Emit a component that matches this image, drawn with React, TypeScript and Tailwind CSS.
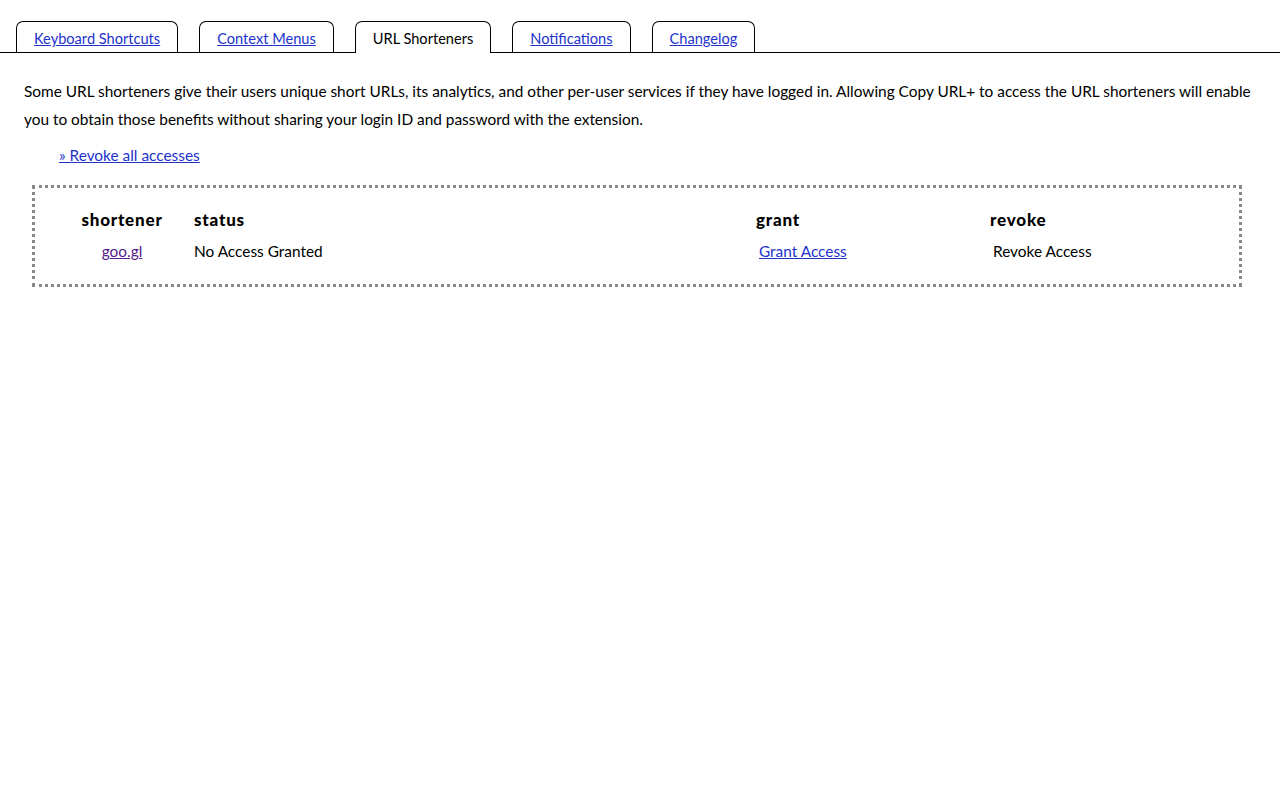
import React from "react";

const tabs = [
  { label: "Keyboard Shortcuts", active: false },
  { label: "Context Menus", active: false },
  { label: "URL Shorteners", active: true },
  { label: "Notifications", active: false },
  { label: "Changelog", active: false },
];

export default function App() {
  return (
    <div className="min-h-[800px] bg-white text-black text-[15.4px]" style={{ fontFamily: "'Gill Sans', Lato, 'Open Sans', sans-serif" }}>
      <div className="pt-[21px] border-b border-black flex pl-[16px] gap-[21px] text-[14.6px]">
        {tabs.map((t) =>
          t.active ? (
            <div
              key={t.label}
              className="h-[32px] -mb-px px-[17px] border border-black border-b-0 rounded-t-[7px] bg-white flex items-center pt-[2px]"
            >
              <span>{t.label}</span>
            </div>
          ) : (
            <div
              key={t.label}
              className="h-[31px] px-[17px] border border-black border-b-0 rounded-t-[7px] flex items-center pt-[3px]"
            >
              <a href="#" className="text-[#2233cc] underline">{t.label}</a>
            </div>
          )
        )}
      </div>
      <div className="px-[24px] pt-[24px]">
        <p className="leading-[28px]">
          Some URL shorteners give their users unique short URLs, its analytics, and other per-user services if they have logged in. Allowing Copy URL+ to access the URL shorteners will enable you to obtain those benefits without sharing your login ID and password with the extension.
        </p>
        <div className="mt-[8px] pl-[35px] leading-[28px]">
          <a href="#" className="text-[#2233cc] underline">» Revoke all accesses</a>
        </div>
      </div>
      <div className="ml-[32px] mr-[38px] mt-[16px] border-[3px] border-dotted border-[#888888] pt-[22px] pb-[23px] pl-[37px]">
        <div className="grid grid-cols-[122px_562px_234px_1fr] leading-[20px] font-black text-[17px] tracking-[0.8px]">
          <div className="w-[100px] text-center">shortener</div>
          <div>status</div>
          <div>grant</div>
          <div>revoke</div>
        </div>
        <div className="grid grid-cols-[122px_562px_234px_1fr] leading-[20px] mt-[11px]">
          <div className="w-[100px] text-center">
            <a href="#" className="text-[#551a8b] underline">goo.gl</a>
          </div>
          <div>No Access Granted</div>
          <div className="pl-[3px]">
            <a href="#" className="text-[#2233cc] underline">Grant Access</a>
          </div>
          <div className="pl-[3px]">Revoke Access</div>
        </div>
      </div>
    </div>
  );
}
